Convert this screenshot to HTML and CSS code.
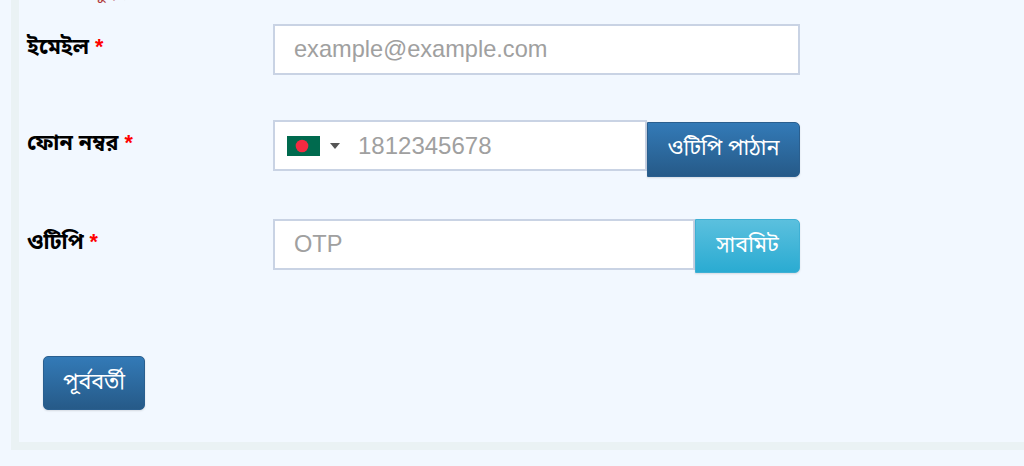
FILE: index.html
```html
<!DOCTYPE html>
<html lang="en">
<head>
  <meta charset="UTF-8">
  <meta name="viewport" content="width=device-width, initial-scale=1.0">
  <title>Registration</title>
  <link rel="stylesheet" href="styles.css">
</head>
<body>
  <div class="panel">
    <p class="notice">অনুগ্রহ করে সঠিক তথ্য দিন</p>
    <form class="form" action="#" method="POST">
      <div class="form-row row-email">
        <label for="email">ইমেইল <span class="req">*</span></label>
        <div class="field">
          <input type="email" id="email" placeholder="example@example.com">
        </div>
      </div>
      <div class="form-row row-phone">
        <label for="phone">ফোন নম্বর <span class="req">*</span></label>
        <div class="field">
          <div class="phone-box">
            <span class="flag-select">
              <svg class="flag" viewBox="0 0 33 20" width="33" height="20">
                <rect width="33" height="20" fill="#006a4e"/>
                <circle cx="15" cy="10" r="6.3" fill="#f42a41"/>
              </svg>
              <span class="caret"></span>
            </span>
            <input type="text" id="phone" placeholder="1812345678">
          </div>
          <button type="button" class="btn btn-primary btn-send">ওটিপি পাঠান</button>
        </div>
      </div>
      <div class="form-row row-otp">
        <label for="otp">ওটিপি <span class="req">*</span></label>
        <div class="field">
          <input type="text" id="otp" placeholder="OTP">
          <button type="button" class="btn btn-info btn-submit">সাবমিট</button>
        </div>
      </div>
      <div class="actions">
        <button type="button" class="btn btn-primary btn-prev">পূর্ববর্তী</button>
      </div>
    </form>
  </div>
</body>
</html>
```

FILE: styles.css
```css
* {
  box-sizing: border-box;
}

html, body {
  height: 466px;
  overflow: hidden;
}

body {
  margin: 0;
  padding: 0 0 0 11px;
  background-color: #f2f8ff;
  font-family: "Liberation Sans", "Noto Sans Bengali", "Noto Sans", sans-serif;
}

.panel {
  height: 456px;
  margin-top: -6px;
  border-left: 8px solid #eaf2f4;
  border-bottom: 8px solid #eaf2f4;
  background-color: #f2f8ff;
}

.notice {
  height: 11px;
  margin: 0;
  padding-left: 60px;
  overflow: hidden;
  font-size: 17px;
  line-height: 0;
  color: #b03a3a;
}

.form {
  padding-top: 19px;
}

.form-row {
  display: flex;
  align-items: flex-start;
  padding-left: 8px;
}

.row-phone {
  margin-top: 45px;
}

.row-otp {
  margin-top: 42px;
}

label {
  width: 246px;
  flex: none;
  padding-top: 9px;
  font-size: 21.5px;
  line-height: 28px;
  font-weight: bold;
  color: #000;
}

.req {
  color: #f00;
}

.field {
  display: flex;
  align-items: flex-start;
  width: 527px;
}

input {
  height: 51px;
  width: 100%;
  min-width: 0;
  padding: 0 19px;
  border: 2px solid #c9d3e4;
  border-radius: 0;
  background-color: #fff;
  font-family: "Liberation Sans", sans-serif;
  font-size: 23.6px;
  color: #333;
  outline: none;
}

input::placeholder {
  color: #a0a0a0;
  opacity: 1;
}

.phone-box {
  display: flex;
  align-items: center;
  width: 374px;
  height: 51px;
  border: 2px solid #c9d3e4;
  background-color: #fff;
}

.phone-box input {
  border: none;
  height: 47px;
  padding: 0 0 0 18px;
  font-size: 24px;
}

.flag-select {
  display: flex;
  flex: none;
  align-items: center;
  padding-left: 12px;
}

.flag {
  display: block;
}

.caret {
  width: 0;
  height: 0;
  margin-left: 10px;
  border-left: 5px solid transparent;
  border-right: 5px solid transparent;
  border-top: 6px solid #555;
}

.btn {
  flex: none;
  padding: 0;
  border: 1px solid transparent;
  border-radius: 0 5px 5px 0;
  font-family: "Liberation Sans", "Noto Sans Bengali", "Noto Sans", sans-serif;
  font-size: 21.5px;
  color: #fff;
  cursor: pointer;
  box-shadow: 0 1px 2px rgba(0, 0, 0, 0.12);
}

.btn-primary {
  background-image: linear-gradient(#337ab7, #265a88);
  border-color: #2a5f8f;
}

.btn-info {
  background-image: linear-gradient(#5bc0de, #2aabd2);
  border-color: #3fb0d4;
}

.btn-send {
  width: 153px;
  height: 55px;
  margin-top: 2px;
}

.btn-submit {
  width: 105px;
  height: 54px;
}

.actions {
  padding: 83px 0 0 24px;
}

.btn-prev {
  width: 102px;
  height: 54px;
  border-radius: 5px;
}
```
